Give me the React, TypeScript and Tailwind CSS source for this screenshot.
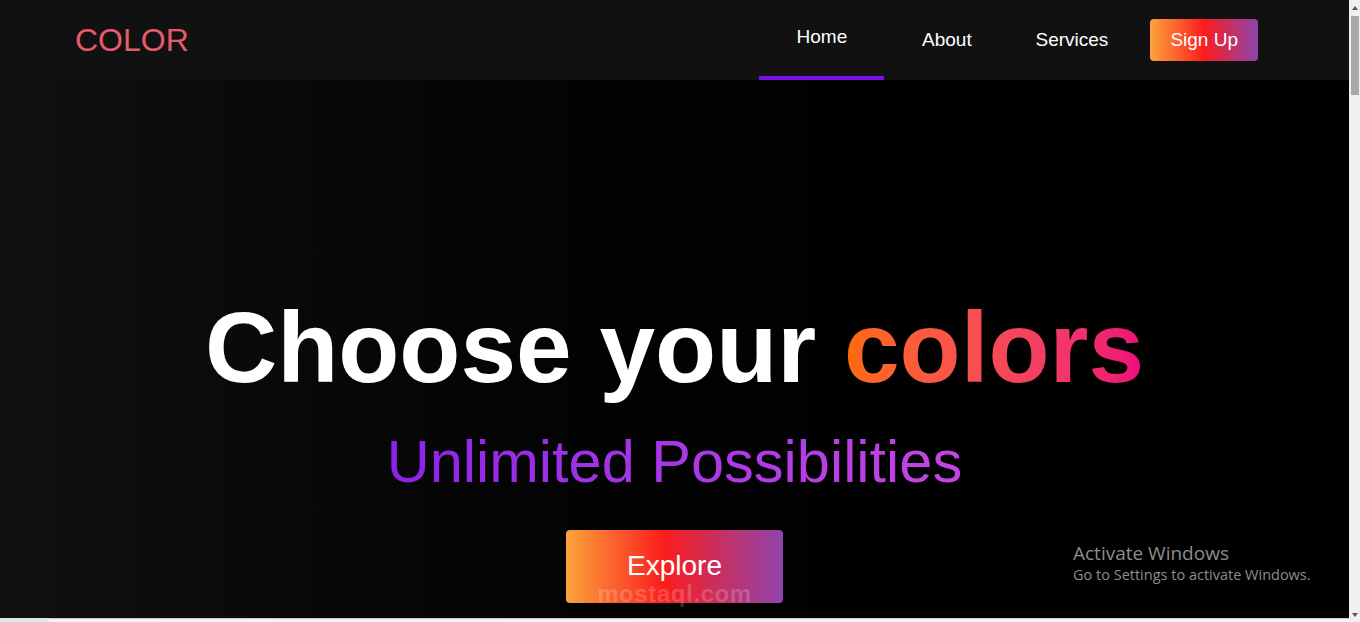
import React from 'react';

const links = ['Home', 'About', 'Services'];

function Scrollbar() {
  return (
    <div className="w-[11px] shrink-0 bg-[#f0f0f0] flex flex-col items-center">
      <div className="h-[16px] flex items-center justify-center">
        <div className="w-0 h-0 border-l-[3px] border-r-[3px] border-b-[4px] border-l-transparent border-r-transparent border-b-[#555]" />
      </div>
      <div className="w-[8px] h-[79px] bg-[#a8a8a8]" />
      <div className="flex-1" />
      <div className="h-[14px] flex items-center justify-center">
        <div className="w-0 h-0 border-l-[3px] border-r-[3px] border-t-[4px] border-l-transparent border-r-transparent border-t-[#555]" />
      </div>
    </div>
  );
}

export default function App() {
  return (
    <div className="h-[622px] w-[1360px] flex overflow-hidden font-['Liberation_Sans',Arial,sans-serif] bg-black">
      <div className="flex-1 flex flex-col">
        {/* Navbar */}
        <nav className="h-20 bg-[#111111] flex items-center pl-[75px] pr-[91px]">
          <div className="text-[32px] leading-none text-[#e35b6c]">COLOR</div>
          <div className="ml-auto flex items-center h-full">
            {links.map((link, i) => (
              <a
                key={link}
                href="#"
                className={`w-[125px] h-full flex items-center justify-center text-[19px] text-white border-b-4 ${
                  i === 0 ? 'border-[#7a10e6] pb-[2px]' : 'border-transparent pt-[4px]'
                }`}
              >
                {link}
              </a>
            ))}
            <button className="ml-4 h-[42px] px-5 rounded bg-[linear-gradient(to_right,#fca43c,#fb1d1d_50%,#8e44ad)] text-[19px] text-white">
              Sign Up
            </button>
          </div>
        </nav>

        {/* Hero */}
        <section className="relative flex-1 bg-gradient-to-r from-[#111111] to-black flex flex-col items-center pt-[217px]">
          <h1 className="text-[100px] leading-none font-bold text-white">
            Choose your{' '}
            <span className="bg-gradient-to-r from-[#ff6a00] to-[#ee0979] bg-clip-text text-transparent">colors</span>
          </h1>
          <p className="mt-[35px] text-[59.5px] leading-none bg-gradient-to-r from-[#8d20ea] to-[#c545e2] bg-clip-text text-transparent">
            Unlimited Possibilities
          </p>
          <button className="relative mt-[38px] w-[217px] h-[73px] rounded bg-[linear-gradient(to_right,#fca43c,#fb1d1d_45%,#8e44ad)] text-white">
            <span className="block text-[28px] leading-none">Explore</span>
            <span className="absolute left-0 right-0 bottom-[-3px] text-[24px] leading-none font-bold text-white/20 tracking-wide">
              mostaql.com
            </span>
          </button>

          {/* Windows activation overlay */}
          <div className="absolute left-[1073px] top-[461px] text-[#8c8c8c] font-['Open_Sans',sans-serif]">
            <div className="text-[19px] leading-6">Activate Windows</div>
            <div className="text-[14.5px] leading-5">Go to Settings to activate Windows.</div>
          </div>
        </section>

        <div className="h-[4px] flex">
          <div className="w-[49px] bg-[#dce8f0]" />
          <div className="flex-1 bg-[#f4f4f4] border-t border-[#c8c8c8]" />
        </div>
      </div>
      <Scrollbar />
    </div>
  );
}
